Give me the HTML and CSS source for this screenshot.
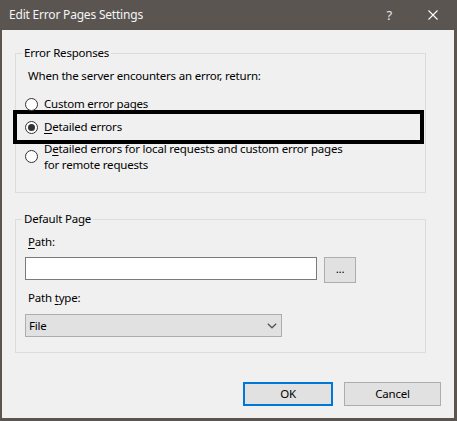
FILE: index.html
```html
<!DOCTYPE html>
<html>
<head>
<meta charset="utf-8">
<link rel="stylesheet" href="styles.css">
</head>
<body>
<div class="window">
  <div class="titlebar">
    <span class="title">Edit Error Pages Settings</span>
    <span class="help">?</span>
    <svg class="close" width="10" height="10" viewBox="0 0 10 10"><path d="M0.5 0.5L9.5 9.5M9.5 0.5L0.5 9.5" stroke="#ffffff" stroke-width="1.1" fill="none"/></svg>
  </div>
  <div class="body">
    <fieldset class="group group-responses">
      <legend>Error Responses</legend>
      <p class="intro">When the server encounters an error, return:</p>
      <div class="radio-row row-custom"><span class="radio"></span><span>Custom error pages</span></div>
      <div class="radio-row row-detailed"><span class="radio checked"></span><span><u>D</u>etailed errors</span></div>
      <div class="radio-row row-local"><span class="radio"></span><span>D<u>e</u>tailed errors for local requests and custom error pages<br>for remote requests</span></div>
    </fieldset>
    <fieldset class="group group-default">
      <legend>Default Page</legend>
      <div class="field-label"><u>P</u>ath:</div>
      <div class="path-row">
        <div class="textbox"></div>
        <div class="browse">...</div>
      </div>
      <div class="field-label field-label-type">Path <u>t</u>ype:</div>
      <div class="select">
        <span>File</span>
        <svg class="chevron" width="10" height="6" viewBox="0 0 10 6"><path d="M0.8 0.8L5 4.8L9.2 0.8" stroke="#555555" stroke-width="1.3" fill="none"/></svg>
      </div>
    </fieldset>
    <div class="actions">
      <div class="btn btn-default">OK</div>
      <div class="btn btn-cancel">Cancel</div>
    </div>
  </div>
</div>
</body>
</html>
```

FILE: styles.css
```css
* { box-sizing: border-box; }
html, body {
  margin: 0;
  padding: 0;
  width: 457px;
  height: 421px;
  overflow: hidden;
}
body {
  font-family: "Noto Sans", "Liberation Sans", sans-serif;
  font-size: 11.5px;
  letter-spacing: -0.2px;
  line-height: 16px;
  color: #000;
}
.window {
  width: 457px;
  height: 421px;
  display: flex;
  flex-direction: column;
  background: #f0f0f0;
}
.titlebar {
  height: 30px;
  flex: none;
  background: #5b5552;
  color: #f4f4f4;
  display: flex;
  align-items: center;
  padding: 0 19px 0 9px;
}
.title { flex: 1; font-size: 12px; }
.help {
  font-size: 13px;
  margin-right: 36px;
  color: #e8e8e8;
}
.close { display: block; }
.body {
  flex: 1;
  border: solid #5b5552;
  border-width: 0 3px 3px 2px;
  padding: 15px 0 0 13px;
  display: flex;
  flex-direction: column;
}
.group {
  margin: 0 28px 0 0;
  border: 1px solid #dcdcdc;
  padding: 0;
  min-width: 0;
}
.group legend {
  margin-left: 6px;
  padding: 0 2px;
  line-height: 16px;
}
.group-responses { padding-bottom: 19px; }
.intro {
  margin: 7px 0 0 12px;
}
.radio-row {
  display: flex;
  align-items: center;
}
.radio {
  width: 13px;
  height: 13px;
  border: 1px solid #333;
  border-radius: 50%;
  background: #fff;
  flex: none;
  margin: 0 6px 0 9px;
  display: flex;
  align-items: center;
  justify-content: center;
}
.radio.checked::after {
  content: "";
  width: 7px;
  height: 7px;
  border-radius: 50%;
  background: #333;
}
.row-custom {
  margin-top: 12px;
  height: 16px;
}
.row-detailed {
  border: 4px solid #000;
  height: 34px;
  margin: -2px 1px 0 -3px;
}
.row-detailed .radio { margin-left: 8px; }
.row-local {
  margin-top: -3px;
  line-height: 16px;
}
.row-local .radio { margin-top: -1px; }
u {
  text-decoration-thickness: 1px;
  text-underline-offset: 2px;
}
.group-default {
  margin-top: 18px;
  padding-bottom: 15px;
}
.field-label {
  margin: 7px 0 0 12px;
}
.field-label-type { margin-top: 7px; }
.path-row {
  display: flex;
  align-items: flex-start;
  margin: 7px 0 0 9px;
}
.textbox {
  width: 292px;
  height: 23px;
  border: 1px solid #7a7a7a;
  background: #fff;
}
.browse {
  width: 32px;
  height: 26px;
  margin-left: 7px;
  border: 1px solid #adadad;
  background: #e1e1e1;
  display: flex;
  align-items: center;
  justify-content: center;
  padding-bottom: 2px;
}
.select {
  margin: 8px 0 0 9px;
  width: 257px;
  height: 23px;
  border: 1px solid #adadad;
  background: #e1e1e1;
  display: flex;
  align-items: center;
  justify-content: space-between;
  padding: 0 4px 0 3px;
}
.chevron { display: block; }
.actions {
  margin-top: 29px;
  display: flex;
  justify-content: flex-end;
  gap: 11px;
  padding-right: 13px;
}
.btn {
  height: 24px;
  background: #e1e1e1;
  display: flex;
  align-items: center;
  justify-content: center;
}
.btn-default {
  width: 90px;
  border: 2px solid #0078d7;
}
.btn-cancel {
  width: 97px;
  border: 1px solid #adadad;
}
```
